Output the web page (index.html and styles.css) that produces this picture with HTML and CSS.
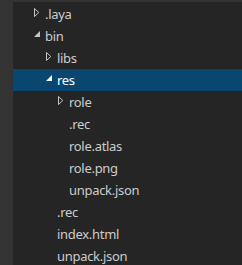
FILE: index.html
```html
<!DOCTYPE html>
<html>
<head>
<meta charset="utf-8">
<link rel="stylesheet" href="styles.css">
</head>
<body>
<div class="window">
  <div class="activity"></div>
  <div class="explorer">
    <div class="row lv0"><span class="twist"><svg class="closed" width="6" height="9" viewBox="0 0 6 9"><path d="M0.5 0.5 L4.8 4.5 L0.5 8.5 Z" fill="none" stroke="#c5c5c5" stroke-width="1"/></svg></span><span class="name">.laya</span></div>
    <div class="row lv0"><span class="twist"><svg class="open" width="6" height="6" viewBox="0 0 6 6"><path d="M6 0 L6 6 L0 6 Z" fill="#c5c5c5"/></svg></span><span class="name">bin</span></div>
    <div class="row lv1"><span class="twist"><svg class="closed" width="6" height="9" viewBox="0 0 6 9"><path d="M0.5 0.5 L4.8 4.5 L0.5 8.5 Z" fill="none" stroke="#c5c5c5" stroke-width="1"/></svg></span><span class="name">libs</span></div>
    <div class="row lv1 selected"><span class="twist"><svg class="open" width="6" height="6" viewBox="0 0 6 6"><path d="M6 0 L6 6 L0 6 Z" fill="#ffffff"/></svg></span><span class="name">res</span></div>
    <div class="row lv2"><span class="twist"><svg class="closed" width="6" height="9" viewBox="0 0 6 9"><path d="M0.5 0.5 L4.8 4.5 L0.5 8.5 Z" fill="none" stroke="#c5c5c5" stroke-width="1"/></svg></span><span class="name">role</span></div>
    <div class="row lv2"><span class="twist"></span><span class="name">.rec</span></div>
    <div class="row lv2"><span class="twist"></span><span class="name">role.atlas</span></div>
    <div class="row lv2"><span class="twist"></span><span class="name">role.png</span></div>
    <div class="row lv2"><span class="twist"></span><span class="name">unpack.json</span></div>
    <div class="row lv1"><span class="twist"></span><span class="name">.rec</span></div>
    <div class="row lv1"><span class="twist"></span><span class="name">index.html</span></div>
    <div class="row lv1"><span class="twist"></span><span class="name">unpack.json</span></div>
  </div>
</div>
</body>
</html>
```

FILE: styles.css
```css
html, body {
  margin: 0;
  padding: 0;
  background: #252526;
}
.window {
  display: flex;
  width: 242px;
  height: 265px;
  overflow: hidden;
  border-top: 2px solid #333333;
  box-sizing: border-box;
}
.activity {
  width: 13px;
  flex: none;
  background: #333333;
}
.explorer {
  flex: 1;
  padding-top: 1px;
  font-family: "Noto Sans", "Open Sans", sans-serif;
  font-size: 13px;
  letter-spacing: -0.3px;
  color: #cccccc;
}
.row {
  height: 22px;
  display: flex;
  align-items: center;
  white-space: nowrap;
}
.lv0 { padding-left: 21px; }
.lv1 { padding-left: 33px; }
.lv2 { padding-left: 45px; }
.twist {
  width: 11px;
  flex: none;
  display: flex;
  align-items: center;
  height: 22px;
}
.twist svg { display: block; }
.twist .closed { margin-top: -3px; }
.twist .open { margin-top: -5px; }
.name {
  line-height: 22px;
  margin-top: -1px;
}
.selected {
  background: #094771;
  color: #ffffff;
}
```
